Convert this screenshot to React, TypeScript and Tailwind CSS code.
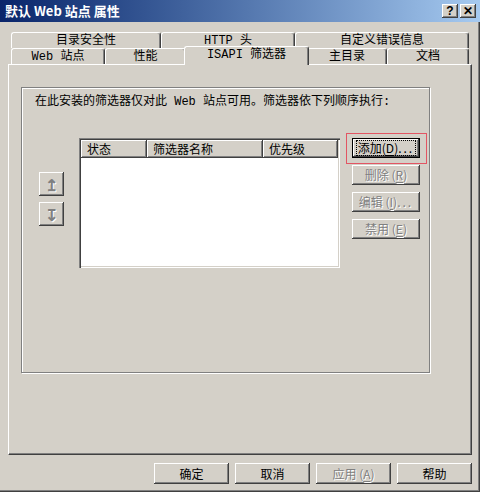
import React from "react";

const font = "font-['Liberation_Mono','Noto_Sans_CJK_SC',monospace]";
const btnFont = "font-['Noto_Sans_CJK_SC',sans-serif]";
const raised =
  "shadow-[inset_-1px_-1px_0_#404040,inset_1px_1px_0_#ffffff,inset_-2px_-2px_0_#808080,inset_2px_2px_0_#d4d0c8]";
const disabledText = "text-[#808080] [text-shadow:1px_1px_0_#ffffff]";

const U = ({ c }: { c: string }) => <span className="underline underline-offset-2">{c}</span>;
const Dots = () => <span className="tracking-[2px]">...</span>;

const WinButton = ({
  children,
  className = "",
  disabled = false,
}: {
  children: React.ReactNode;
  className?: string;
  disabled?: boolean;
}) => (
  <div
    className={`flex items-center justify-center whitespace-pre bg-[#d4d0c8] text-[12px] leading-none ${btnFont} ${raised} ${
      disabled ? disabledText : "text-black"
    } ${className}`}
  >
    {children}
  </div>
);

const backTabs = [
  { label: "目录安全性", w: "w-[150px]" },
  { label: "HTTP 头", w: "w-[134px]" },
  { label: "自定义错误信息", w: "w-[174px]" },
];

const frontTabs = [
  { label: "Web 站点", w: "w-[94px]" },
  { label: "性能", w: "w-[81px]" },
  { label: "ISAPI 筛选器", w: "w-[125px]", active: true },
  { label: "主目录", w: "w-[80px]" },
  { label: "文档", w: "w-[82px]" },
];

const tabCls =
  "flex items-center justify-center whitespace-nowrap rounded-t-[3px] border-t border-l border-white border-r border-r-[#404040] shadow-[inset_-1px_0_0_#808080] bg-[#d4d0c8] text-[12px] text-black";

export default function App() {
  return (
    <div
      className={`relative w-[480px] h-[492px] overflow-hidden bg-[#d4d0c8] ${font} shadow-[inset_-1px_-1px_0_#404040,inset_-2px_-2px_0_#808080]`}
    >
      {/* Title bar */}
      <div className="flex h-[22px] items-center justify-between bg-linear-to-r from-[#0a246a] to-[#a6caf0] pl-[5px] pr-[4px]">
        <span className="font-['Noto_Sans_CJK_SC',sans-serif] text-[13px] font-bold text-white">
          默认 Web 站点 属性
        </span>
        <div className="flex gap-[2px]">
          <WinButton className="h-[14px] w-[16px] !font-['Liberation_Sans',sans-serif] text-[11px] font-bold">?</WinButton>
          <WinButton className="h-[14px] w-[16px] !font-['Liberation_Sans',sans-serif] text-[11px] font-bold">✕</WinButton>
        </div>
      </div>

      {/* Tabs */}
      <div className="mt-[10px] pl-[11px]">
        <div className="flex h-[16px]">
          {backTabs.map((t) => (
            <div key={t.label} className={`${tabCls} ${t.w} h-[16px]`}>
              {t.label}
            </div>
          ))}
        </div>
        <div className="flex h-[16px] items-end">
          {frontTabs.map((t) =>
            t.active ? (
              <div
                key={t.label}
                className={`${tabCls} ${t.w} relative top-[1px] z-10 -mx-[2px] h-[19px] pb-[2px]`}
              >
                {t.label}
              </div>
            ) : (
              <div key={t.label} className={`${tabCls} ${t.w} h-[16px]`}>
                {t.label}
              </div>
            )
          )}
        </div>
      </div>

      {/* Tab panel */}
      <div className="ml-[8px] h-[391px] w-[464px] border-t border-l border-white border-r border-b border-r-[#404040] border-b-[#404040] shadow-[inset_-1px_-1px_0_#808080] pt-[22px] pl-[12px]">
        <div className="relative h-[286px] w-[409px] border border-[#808080] shadow-[1px_1px_0_#ffffff,inset_1px_1px_0_#ffffff] pt-[7px] pl-[13px]">
          <div className="h-[14px] whitespace-nowrap text-[12px] leading-[14px] text-black">
            在此安装的筛选器仅对此 Web 站点可用。筛选器依下列顺序执行:
          </div>

          <div className="ml-[4px] mt-[29px] flex">
            {/* Up / down */}
            <div className="mt-[34px] flex w-[25px] flex-col gap-[6px]">
              <WinButton className="h-[24px] w-[25px]" disabled>
                <span className="text-[16px] font-bold">↥</span>
              </WinButton>
              <WinButton className="h-[24px] w-[25px]" disabled>
                <span className="text-[16px] font-bold">↧</span>
              </WinButton>
            </div>

            {/* List view */}
            <div className="ml-[15px] h-[130px] w-[261px] bg-white shadow-[inset_1px_1px_0_#808080,inset_2px_2px_0_#404040,inset_-1px_-1px_0_#ffffff,inset_-2px_-2px_0_#d4d0c8] p-[2px]">
              <div className={`flex h-[18px] text-[12px] text-black ${btnFont}`}>
                <div className={`flex w-[66px] items-center pl-[6px] bg-[#d4d0c8] ${raised}`}>状态</div>
                <div className={`flex w-[116px] items-center pl-[6px] bg-[#d4d0c8] ${raised}`}>筛选器名称</div>
                <div className={`flex flex-1 items-center pl-[6px] bg-[#d4d0c8] ${raised}`}>优先级</div>
              </div>
            </div>

            {/* Action buttons */}
            <div className="relative ml-[12px] flex w-[68px] flex-col gap-[7px]">
              <div className="absolute -left-[6px] -top-[5px] h-[31px] w-[81px] border border-[#e25563]" />
              <div className="h-[20px] w-[68px] border border-black">
                <WinButton className="h-full w-full">
                  <span className="border border-dotted border-black px-[1px] py-[1px]">
                    添加(<U c="D" />)<Dots />
                  </span>
                </WinButton>
              </div>
              <WinButton className="h-[20px] w-[68px]" disabled>
                删除 (<U c="R" />)
              </WinButton>
              <WinButton className="h-[20px] w-[68px]" disabled>
                编辑 (<U c="I" />)<Dots />
              </WinButton>
              <WinButton className="h-[20px] w-[68px]" disabled>
                禁用 (<U c="E" />)
              </WinButton>
            </div>
          </div>
        </div>
      </div>

      {/* Bottom buttons */}
      <div className="ml-[154px] mt-[8px] flex gap-[6px]">
        <WinButton className="h-[21px] w-[75px]">确定</WinButton>
        <WinButton className="h-[21px] w-[75px]">取消</WinButton>
        <WinButton className="h-[21px] w-[75px]" disabled>
          应用 (<U c="A" />)
        </WinButton>
        <WinButton className="h-[21px] w-[75px]">帮助</WinButton>
      </div>
    </div>
  );
}
